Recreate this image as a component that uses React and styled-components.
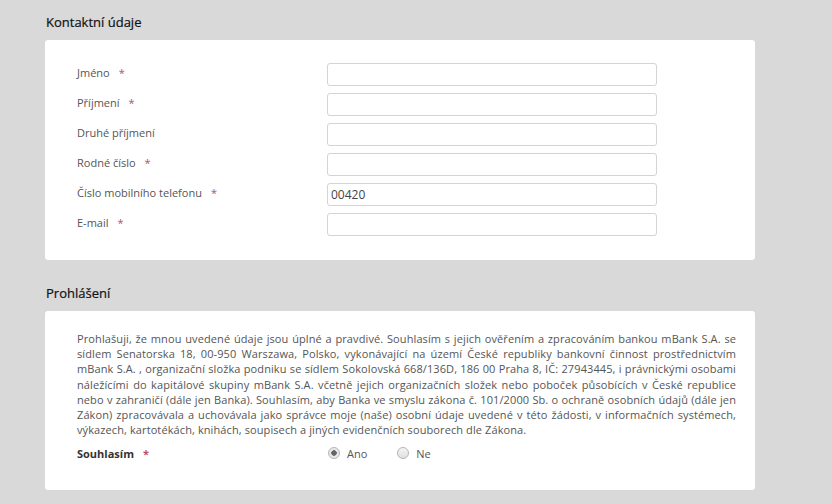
import React from 'react'
import styled, { createGlobalStyle } from 'styled-components'

const Global = createGlobalStyle`
  body {
    margin: 0;
    background: #d9d9d9;
    font-family: "Open Sans", "Liberation Sans", sans-serif;
  }
`

const fields = [
  { label: 'Jméno', required: true },
  { label: 'Příjmení', required: true },
  { label: 'Druhé příjmení' },
  { label: 'Rodné číslo', required: true },
  { label: 'Číslo mobilního telefonu', required: true, value: '00420' },
  { label: 'E-mail', required: true },
]

const text =
  'Prohlašuji, že mnou uvedené údaje jsou úplné a pravdivé. Souhlasím s jejich ověřením a zpracováním bankou mBank S.A. se sídlem Senatorska 18, 00-950 Warszawa, Polsko, vykonávající na území České republiky bankovní činnost prostřednictvím mBank S.A. , organizační složka podniku se sídlem Sokolovská 668/136D, 186 00 Praha 8, IČ: 27943445, i právnickými osobami náležícími do kapitálové skupiny mBank S.A. včetně jejich organizačních složek nebo poboček působících v České republice nebo v zahraničí (dále jen Banka). Souhlasím, aby Banka ve smyslu zákona č. 101/2000 Sb. o ochraně osobních údajů (dále jen Zákon) zpracovávala a uchovávala jako správce moje (naše) osobní údaje uvedené v této žádosti, v informačních systémech, výkazech, kartotékách, knihách, soupisech a jiných evidenčních souborech dle Zákona.'

function App() {
  return (
    <>
      <Global />
      <Page>
        <Heading>Kontaktní údaje</Heading>
        <Card>
          {fields.map((f) => (
            <Row key={f.label}>
              <Label>
                {f.label}
                {f.required && <Star>*</Star>}
              </Label>
              <Input defaultValue={f.value || ''} />
            </Row>
          ))}
        </Card>

        <Heading $second>Prohlášení</Heading>
        <Card $decl>
          <Para>{text}</Para>
          <Row>
            <Label $bold>
              Souhlasím<Star>*</Star>
            </Label>
            <Radios>
              <Option>
                <Radio $checked />
                Ano
              </Option>
              <Option>
                <Radio />
                Ne
              </Option>
            </Radios>
          </Row>
        </Card>
      </Page>
    </>
  )
}

export default App

const Page = styled.div`
  width: 710px;
  padding: 13px 0 0 45px;
`

const Heading = styled.h2`
  margin: ${(p) => (p.$second ? '24px' : '0')} 0 0 1px;
  height: 27px;
  font-size: 13px;
  font-weight: 400;
  color: #111;
  line-height: 18px;
  -webkit-text-stroke: 0.2px #111;
`

const Card = styled.div`
  background: #fff;
  border-radius: 3px;
  padding: ${(p) => (p.$decl ? '20px 19px 22px 32px' : '19px 32px 21px 32px')};
`

const Row = styled.div`
  display: flex;
  align-items: center;
  height: 30px;
`

const Label = styled.div`
  width: 250px;
  flex: none;
  padding-bottom: ${(p) => (p.$bold ? '0' : '3px')};
  font-size: 11px;
  color: ${(p) => (p.$bold ? '#333' : '#555')};
  font-weight: ${(p) => (p.$bold ? 700 : 400)};
`

const Star = styled.span`
  color: #b4506e;
  margin-left: 9px;
`

const Input = styled.input`
  box-sizing: border-box;
  width: 330px;
  height: 23px;
  border: 1px solid #d4d4d4;
  border-radius: 3px;
  padding: 0 3px;
  font-family: "Open Sans", "Liberation Sans", sans-serif;
  font-size: 12px;
  color: #444;
  outline: none;
`

const Para = styled.p`
  margin: 0 0 1px 0;
  font-size: 11px;
  letter-spacing: 0.1px;
  line-height: 15.2px;
  color: #555;
  text-align: justify;
`

const Radios = styled.div`
  display: flex;
  gap: 30px;
  padding-left: 1px;
`

const Option = styled.label`
  display: flex;
  align-items: center;
  gap: 7px;
  font-size: 11px;
  color: #555;
`

const Radio = styled.span`
  box-sizing: border-box;
  width: 12px;
  height: 12px;
  border-radius: 50%;
  border: 1px solid #b5b5b5;
  background: ${(p) =>
    p.$checked
      ? 'radial-gradient(circle, #666 0 2.5px, #e8e8e8 3px)'
      : 'linear-gradient(#f4f4f4, #e0e0e0)'};
`
